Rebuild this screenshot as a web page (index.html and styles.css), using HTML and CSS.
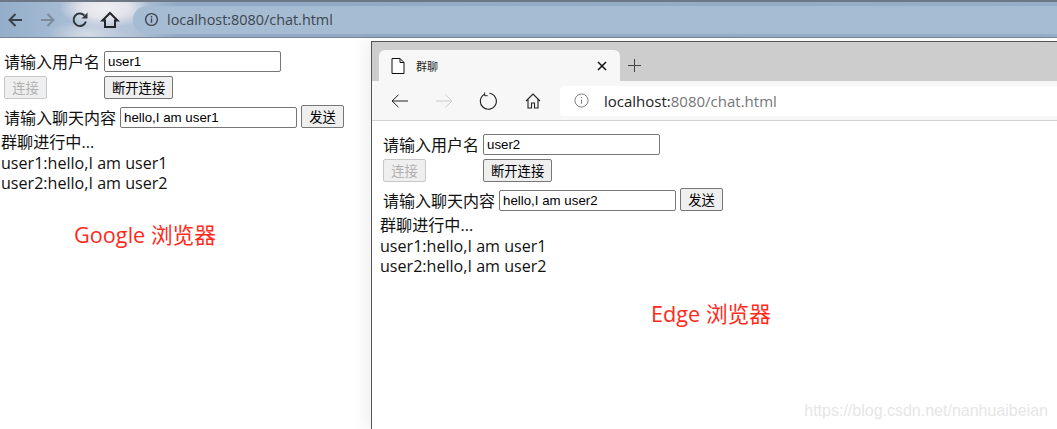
FILE: index.html
```html
<!DOCTYPE html>
<html lang="zh">
<head>
<meta charset="utf-8">
<title>群聊</title>
<link rel="stylesheet" href="styles.css">
</head>
<body>
<div class="desktop">
  <section class="chrome-win">
    <header class="chrome-bar">
      <svg class="ic" viewBox="0 0 20 20" width="20" height="20"><path d="M16 10H3.500M9.500 4l-6 6 6 6" fill="none" stroke="#3a4048" stroke-width="2"/></svg>
      <svg class="ic ic-fwd" viewBox="0 0 20 20" width="20" height="20"><path d="M4 10h12.500M10.500 4l6 6-6 6" fill="none" stroke="#7d8a99" stroke-width="2"/></svg>
      <svg class="ic ic-reload" viewBox="0 0 20 20" width="20" height="20"><path d="M15.800 11.500A6.200 6.200 0 1 1 14.300 5.500" fill="none" stroke="#33383e" stroke-width="2"/><path d="M11.500 8.500h6v-6z" fill="#33383e"/></svg>
      <svg class="ic ic-home" viewBox="0 0 20 20" width="20" height="20"><path d="M2.500 10.500L10 3l7.500 7.500H15V17H5v-6.500z" fill="none" stroke="#22262b" stroke-width="2"/></svg>
      <div class="omni">
        <svg viewBox="0 0 16 16" width="15" height="15"><circle cx="8" cy="8" r="6.300" fill="none" stroke="#3f464e" stroke-width="1.500"/><path d="M8 7v4.500M8 4.300v1.500" stroke="#3f464e" stroke-width="1.500"/></svg>
        <span>localhost:8080/chat.html</span>
      </div>
    </header>
    <main class="page">
      <div class="row"><label class="lbl-name">请输入用户名</label><div class="field">user1</div></div>
      <div class="btn-row"><button class="btn first" disabled>连接</button><button class="btn">断开连接</button></div>
      <div class="row row-msg"><label>请输入聊天内容</label><div class="field">hello,I am user1</div><button class="btn">发送</button></div>
      <div class="log"><div>群聊进行中...</div><div>user1:hello,I am user1</div><div>user2:hello,I am user2</div></div>
      <p class="note note-google">Google 浏览器</p>
    </main>
  </section>

  <section class="edge-win">
    <div class="tabstrip">
      <div class="tab">
        <svg viewBox="0 0 14 16" width="14" height="16"><path d="M1 .5h8l4 4v11H1z M9 .5v4h4" fill="#fff" stroke="#111" stroke-width="1"/></svg>
        <span class="tab-title">群聊</span>
        <svg class="tab-x" viewBox="0 0 10 10" width="10" height="10"><path d="M1 1l8 8M9 1l-8 8" stroke="#111" stroke-width="1.500"/></svg>
      </div>
      <svg class="plus" viewBox="0 0 13 13" width="13" height="13"><path d="M6.500 0v13M0 6.500h13" stroke="#444" stroke-width="1"/></svg>
    </div>
    <div class="edge-bar">
      <svg class="e-ic" viewBox="0 0 18 14" width="18" height="14"><path d="M17 7H1M7.500 .8L1 7l6.500 6.200" fill="none" stroke="#222" stroke-width="1"/></svg>
      <svg class="e-ic e-fwd" viewBox="0 0 18 14" width="18" height="14"><path d="M1 7h16M10.500 .8L17 7l-6.500 6.200" fill="none" stroke="#ccc" stroke-width="1"/></svg>
      <svg class="e-ic e-reload" viewBox="0 0 18 18" width="18" height="18"><path d="M5.500 2.200a8 8 0 1 0 5-.9" fill="none" stroke="#222" stroke-width="1.100"/><path d="M5.600 .5v3.200h3" fill="none" stroke="#222" stroke-width="1"/></svg>
      <svg class="e-ic e-home" viewBox="0 0 16 16" width="16" height="16"><path d="M1 8l7-7 7 7M3 6.500V15h3.500v-5h3v5H13V6.500" fill="none" stroke="#222" stroke-width="1.100"/></svg>
      <div class="e-addr">
        <svg viewBox="0 0 16 16" width="15" height="15"><circle cx="8" cy="8" r="7" fill="none" stroke="#777" stroke-width="1"/><path d="M8 7v4.500M8 4.200v1.200" stroke="#777" stroke-width="1"/></svg>
        <span><b>localhost:</b>8080/chat.html</span>
      </div>
    </div>
    <main class="page">
      <div class="row"><label class="lbl-name">请输入用户名</label><div class="field">user2</div></div>
      <div class="btn-row"><button class="btn first" disabled>连接</button><button class="btn">断开连接</button></div>
      <div class="row row-msg"><label>请输入聊天内容</label><div class="field">hello,I am user2</div><button class="btn">发送</button></div>
      <div class="log"><div>群聊进行中...</div><div>user1:hello,I am user1</div><div>user2:hello,I am user2</div></div>
      <p class="note note-edge">Edge 浏览器</p>
    </main>
    <div class="watermark">https://blog.csdn.net/nanhuaibeian</div>
  </section>
</div>
</body>
</html>
```

FILE: styles.css
```css
* { box-sizing: border-box; }
html, body { margin: 0; height: 100%; overflow: hidden; background: #fff; }
body { font-family: "Open Sans", "Noto Sans CJK SC", sans-serif; color: #111; }
.desktop { position: relative; width: 1057px; height: 429px; overflow: hidden; }

.chrome-bar {
  height: 38px;
  display: flex;
  align-items: center;
  padding-left: 6px;
  border-top: 2px solid #6c7684;
  border-bottom: 1px solid #77859a;
  background:
    radial-gradient(ellipse 46px 20px at 105px 6px, #efeef2 0, #e4e4ec 50%, rgba(200, 212, 228, 0) 100%),
    radial-gradient(ellipse 40px 14px at 88px 32px, #d6dce6 0, rgba(190, 203, 220, 0) 100%),
    linear-gradient(90deg, #93aeca 0, #a2b9d2 50px, #b4c4d8 130px, #8fa9c6 180px, #97aec9 100%);
}
.ic { flex: none; margin-right: 11px; }
.ic-fwd { margin-right: 10px; }
.ic-reload { margin-left: 3px; margin-right: 10px; }
.ic-home { margin-right: 13px; }
.omni {
  flex: 1;
  height: 28px;
  display: flex;
  align-items: center;
  gap: 8px;
  padding-left: 11px;
  border-radius: 14px 0 0 14px;
  background: #a6bcd3;
  font: 14.400px "Open Sans", sans-serif;
  color: #3d4650;
}

.page { position: relative; padding: 11px 0 0 4px; font-size: 16px; }
.row { display: flex; align-items: center; height: 24px; }
.row label { white-space: nowrap; }
.lbl-name { width: 100px; }
.row-msg { align-items: flex-start; }
.row-msg label { width: 116px; }
.row-msg .field { margin-top: 2px; }
.field {
  width: 177px;
  height: 21px;
  padding: 0 3px;
  border: 1px solid #767676;
  border-radius: 2px;
  background: #fff;
  font: 13.300px/19px "Liberation Sans", sans-serif;
  color: #000;
}
.btn-row { display: flex; margin-top: 3px; height: 29px; align-items: flex-start; }
.btn {
  height: 23px;
  padding: 0 7px;
  border: 1px solid #767676;
  border-radius: 2px;
  background: #efefef;
  font: 13.300px "Noto Sans CJK SC", sans-serif;
  color: #000;
}
.btn.first { width: 43px; margin-right: 57px; padding: 0; border-color: #c8c8c8; color: #b0b0b0; }
.row-msg .btn { margin-left: 4px; width: 43px; padding: 0; }
.log { margin: 3px 0 0 -3px; font-size: 16.100px; line-height: 20.500px; }
.note { position: absolute; margin: 0; color: #ff2a1a; font-size: 21.700px; line-height: 28px; white-space: nowrap; }
.note-google { left: 74px; top: 183px; }
.note-edge { left: 279px; top: 179px; }

.chrome-win { position: absolute; inset: 0 auto 0 0; width: 100%; }
.edge-win {
  position: absolute;
  left: 371px;
  top: 41px;
  width: 686px;
  height: 388px;
  border-top: 1px solid #555;
  border-left: 1px solid #555;
  background: #fff;
  box-shadow: -8px 0 12px rgba(0, 0, 0, .05);
}
.tabstrip { height: 39px; display: flex; align-items: flex-end; padding-left: 7px; background: #cdcdcd; }
.tab {
  width: 241px;
  height: 31px;
  display: flex;
  align-items: center;
  padding: 0 13px 0 12px;
  border-radius: 6px 6px 0 0;
  background: #f7f7f7;
}
.tab-title { flex: 1; margin-left: 11px; font-size: 11px; color: #222; }
.plus { margin: 0 0 9px 8px; }
.edge-bar {
  height: 40px;
  display: flex;
  align-items: center;
  padding-left: 19px;
  border-bottom: 1px solid #d2d2d2;
  background: #f7f7f7;
}
.e-ic { flex: none; margin-right: 26px; }
.e-fwd { margin-right: 26px; }
.e-reload { margin-right: 28px; }
.e-home { margin-right: 19px; }
.e-addr {
  flex: 1;
  height: 30px;
  display: flex;
  align-items: center;
  gap: 15px;
  padding-left: 14px;
  border-radius: 4px 0 0 4px;
  background: #fff;
  font: 15px "Open Sans", sans-serif;
  color: #767676;
}
.e-addr b { font-weight: 400; color: #222; }
.edge-win .page { padding-left: 11px; }
.watermark {
  position: absolute;
  right: 9px;
  bottom: 9px;
  font: 16px "Liberation Sans", sans-serif;
  color: #e6e6e6;
}
```
